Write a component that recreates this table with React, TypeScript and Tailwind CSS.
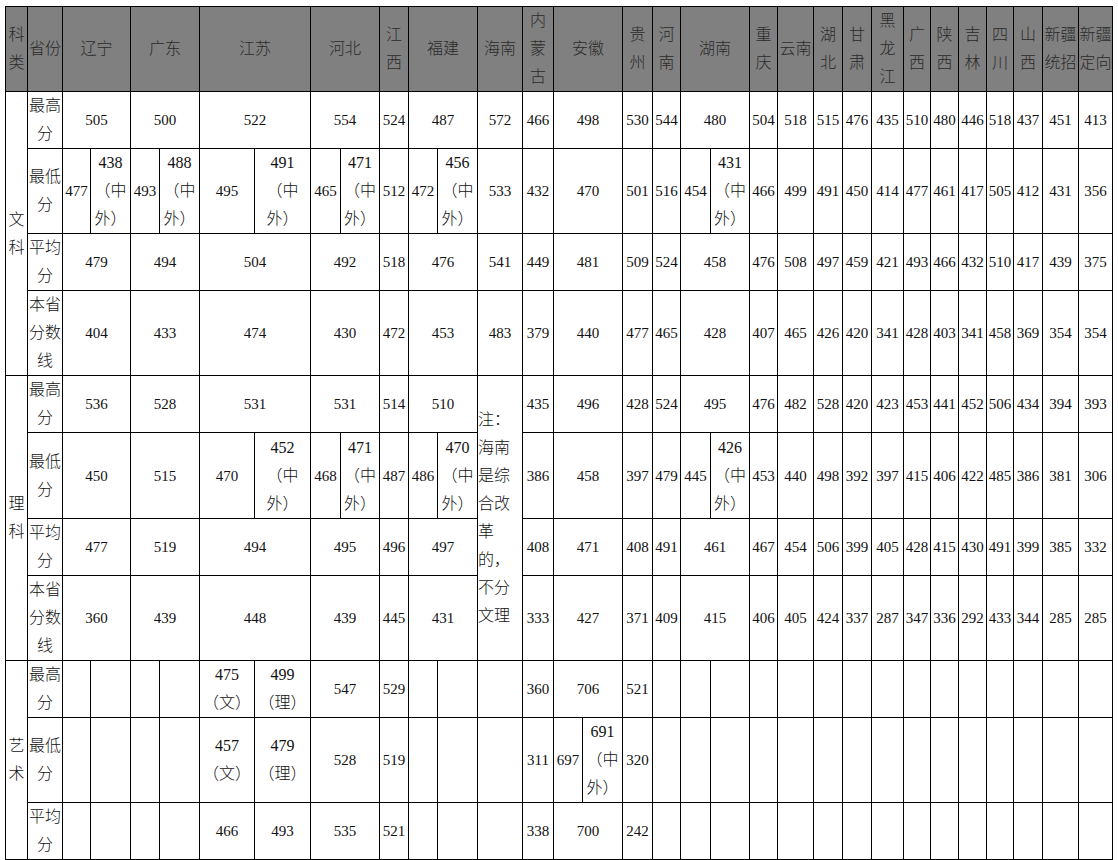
import React from "react";

type Cell = { t: string; cs?: number; rs?: number; zh?: boolean; note?: boolean };

const widths = [22, 35, 28, 40, 29, 40, 55, 56, 30, 39, 29, 29, 40, 45, 31, 29, 40, 30, 28, 30, 39, 28, 36, 29, 29, 32, 27, 28, 28, 27, 29, 36, 34];

const c = (t: string, cs?: number): Cell => ({ t, cs });
const z = (t: string, rs?: number): Cell => ({ t, rs, zh: true });
const Z = (n: string): Cell => ({ t: `${n}\n（中\n外）`, zh: true });
const E = (n: number): Cell[] => Array.from({ length: n }, () => c(""));
const L = (list: string[]): Cell[] => list.map((s) => c(s));

const header: Cell[] = [
  z("科\n类"), z("省份"), { t: "辽宁", cs: 2, zh: true }, { t: "广东", cs: 2, zh: true }, { t: "江苏", cs: 2, zh: true },
  { t: "河北", cs: 2, zh: true }, z("江\n西"), { t: "福建", cs: 2, zh: true }, z("海南"), z("内\n蒙\n古"),
  { t: "安徽", cs: 2, zh: true }, z("贵\n州"), z("河\n南"), { t: "湖南", cs: 2, zh: true }, z("重\n庆"), z("云南"),
  z("湖\n北"), z("甘\n肃"), z("黑\n龙\n江"), z("广\n西"), z("陕\n西"), z("吉\n林"), z("四\n川"), z("山\n西"),
  z("新疆\n统招"), z("新疆\n定向"),
];

const tail12 = (l: string[]) => L(l);

const rows: { h: string; cells: Cell[] }[] = [
  {
    h: "h-[57px]",
    cells: [
      z("文\n科", 4), z("最高\n分"), c("505", 2), c("500", 2), c("522", 2), c("554", 2), c("524"), c("487", 2), c("572"), c("466"),
      c("498", 2), c("530"), c("544"), c("480", 2),
      ...tail12(["504", "518", "515", "476", "435", "510", "480", "446", "518", "437", "451", "413"]),
    ],
  },
  {
    h: "h-[85px]",
    cells: [
      z("最低\n分"), c("477"), Z("438"), c("493"), Z("488"), c("495"), Z("491"), c("465"), Z("471"), c("512"), c("472"), Z("456"),
      c("533"), c("432"), c("470", 2), c("501"), c("516"), c("454"), Z("431"),
      ...tail12(["466", "499", "491", "450", "414", "477", "461", "417", "505", "412", "431", "356"]),
    ],
  },
  {
    h: "h-[57px]",
    cells: [
      z("平均\n分"), c("479", 2), c("494", 2), c("504", 2), c("492", 2), c("518"), c("476", 2), c("541"), c("449"), c("481", 2),
      c("509"), c("524"), c("458", 2),
      ...tail12(["476", "508", "497", "459", "421", "493", "466", "432", "510", "417", "439", "375"]),
    ],
  },
  {
    h: "h-[85px]",
    cells: [
      z("本省\n分数\n线"), c("404", 2), c("433", 2), c("474", 2), c("430", 2), c("472"), c("453", 2), c("483"), c("379"), c("440", 2),
      c("477"), c("465"), c("428", 2),
      ...tail12(["407", "465", "426", "420", "341", "428", "403", "341", "458", "369", "354", "354"]),
    ],
  },
  {
    h: "h-[57px]",
    cells: [
      z("理\n科", 4), z("最高\n分"), c("536", 2), c("528", 2), c("531", 2), c("531", 2), c("514"), c("510", 2),
      { t: "注：\n海南\n是综\n合改\n革\n的，\n不分\n文理", rs: 4, zh: true, note: true },
      c("435"), c("496", 2), c("428"), c("524"), c("495", 2),
      ...tail12(["476", "482", "528", "420", "423", "453", "441", "452", "506", "434", "394", "393"]),
    ],
  },
  {
    h: "h-[86px]",
    cells: [
      z("最低\n分"), c("450", 2), c("515", 2), c("470"), Z("452"), c("468"), Z("471"), c("487"), c("486"), Z("470"), c("386"),
      c("458", 2), c("397"), c("479"), c("445"), Z("426"),
      ...tail12(["453", "440", "498", "392", "397", "415", "406", "422", "485", "386", "381", "306"]),
    ],
  },
  {
    h: "h-[56px]",
    cells: [
      z("平均\n分"), c("477", 2), c("519", 2), c("494", 2), c("495", 2), c("496"), c("497", 2), c("408"), c("471", 2), c("408"),
      c("491"), c("461", 2),
      ...tail12(["467", "454", "506", "399", "405", "428", "415", "430", "491", "399", "385", "332"]),
    ],
  },
  {
    h: "h-[85px]",
    cells: [
      z("本省\n分数\n线"), c("360", 2), c("439", 2), c("448", 2), c("439", 2), c("445"), c("431", 2), c("333"), c("427", 2), c("371"),
      c("409"), c("415", 2),
      ...tail12(["406", "405", "424", "337", "287", "347", "336", "292", "433", "344", "285", "285"]),
    ],
  },
  {
    h: "h-[57px]",
    cells: [
      z("艺\n术", 3), z("最高\n分"), ...E(4), z("475\n（文）"), z("499\n（理）"), c("547", 2), c("529"), ...E(3), c("360"),
      c("706", 2), c("521"), ...E(3), ...E(12),
    ],
  },
  {
    h: "h-[85px]",
    cells: [
      z("最低\n分"), ...E(4), z("457\n（文）"), z("479\n（理）"), c("528", 2), c("519"), ...E(3), c("311"), c("697"), Z("691"),
      c("320"), ...E(3), ...E(12),
    ],
  },
  {
    h: "h-[57px]",
    cells: [
      z("平均\n分"), ...E(4), c("466"), c("493"), c("535", 2), c("521"), ...E(3), c("338"), c("700", 2), c("242"), ...E(3), ...E(12),
    ],
  },
];

export default function App() {
  return (
    <div className="min-h-[860px] bg-white pl-[5px] pt-[6px]">
      <table
        className="table-fixed border-collapse text-[15px] leading-[28px] text-[#111]"
        style={{ fontFamily: '"Liberation Serif", "Noto Sans CJK SC", serif', width: 1108 }}
      >
        <colgroup>
          {widths.map((w, i) => (
            <col key={i} style={{ width: w }} />
          ))}
        </colgroup>
        <tbody>
          <tr className="h-[85px] bg-[#808080]">
            {header.map((cell, i) => (
              <td
                key={i}
                colSpan={cell.cs}
                className="whitespace-pre-line border border-black p-0 text-center align-middle text-[16px] font-light leading-[28px] text-[#2a2a2a]"
              >
                {cell.t}
              </td>
            ))}
          </tr>
          {rows.map((r, ri) => (
            <tr key={ri} className={r.h}>
              {r.cells.map((cell, i) => (
                <td
                  key={i}
                  colSpan={cell.cs}
                  rowSpan={cell.rs}
                  className={
                    "whitespace-pre-line border border-black p-0 align-middle " +
                    (cell.note ? "text-left text-[16px] " : "text-center ") +
                    (cell.zh ? "text-[16px] font-light " : "")
                  }
                >
                  {cell.t}
                </td>
              ))}
            </tr>
          ))}
        </tbody>
      </table>
    </div>
  );
}
